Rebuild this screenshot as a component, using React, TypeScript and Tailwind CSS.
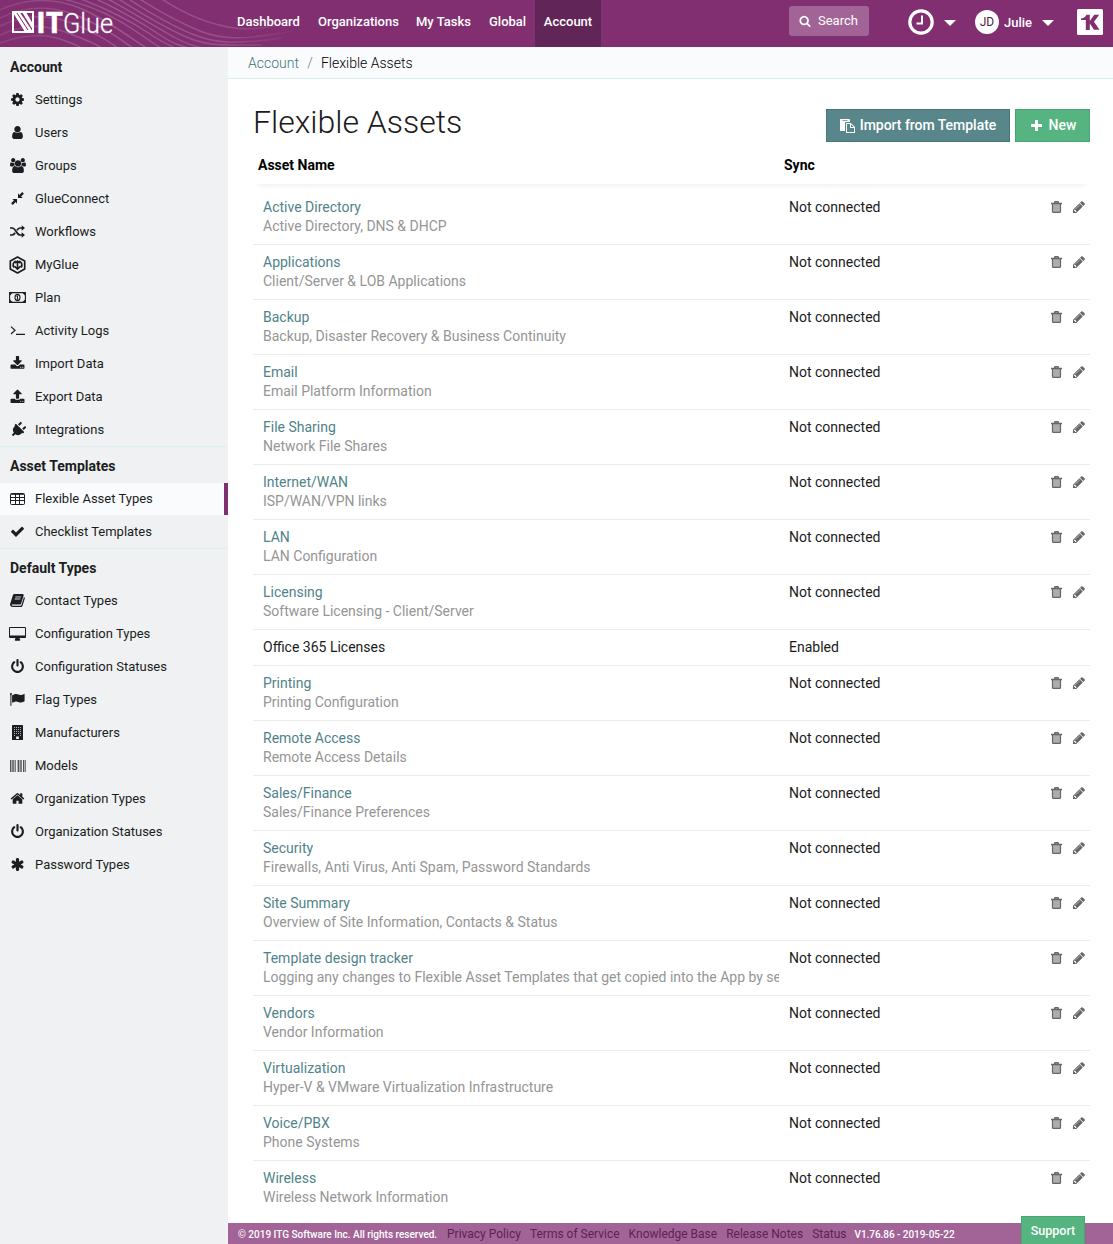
import React from 'react';
import { FaPlug } from 'react-icons/fa';

interface GlyphProps {
    d: string;
    viewBox?: string;
    className?: string;
}

const Glyph: React.FC<GlyphProps> = ({ d, viewBox = '0 0 1792 1792', className = 'w-[15px] h-[15px]' }) => (
    <svg className={className} viewBox={viewBox} fill="currentColor"><path fillRule="evenodd" d={d} /></svg>
);

const COG = 'M1152 896q0-106-75-181t-181-75-181 75-75 181 75 181 181 75 181-75 75-181zm512-109v222q0 12-8 23t-20 13l-185 28q-19 54-39 91 35 50 107 138 10 12 10 25t-9 23q-27 37-99 108t-94 71q-12 0-26-9l-138-108q-44 23-91 38-16 136-29 186-7 28-36 28h-222q-14 0-24.5-8.5t-11.5-21.5l-28-184q-49-16-90-37l-141 107q-10 9-25 9-14 0-25-11-126-114-165-168-7-10-7-23 0-12 8-23 15-21 51-66.5t54-70.5q-27-50-41-99l-183-27q-13-2-21-12.5t-8-23.5v-222q0-12 8-23t19-13l186-28q14-46 39-92-40-57-107-138-10-12-10-24 0-10 9-23 26-36 98.5-107.5t94.5-71.5q13 0 26 10l138 107q44-23 91-38 16-136 29-186 7-28 36-28h222q14 0 24.5 8.5t11.5 21.5l28 184q49 16 90 37l142-107q9-9 24-9 13 0 25 10 129 119 165 170 7 8 7 22 0 12-8 23-15 21-51 66.5t-54 70.5q26 50 41 98l183 28q13 2 21 12.5t8 23.5z';
const USER = 'M1536 1399q0 109-62.5 187t-150.5 78h-854q-88 0-150.5-78t-62.5-187q0-85 8.5-160.5t31.5-152 58.5-131 94-89 134.5-34.5q131 128 313 128t313-128q76 0 134.5 34.5t94 89 58.5 131 31.5 152 8.5 160.5zm-256-887q0 159-112.5 271.5t-271.5 112.5-271.5-112.5-112.5-271.5 112.5-271.5 271.5-112.5 271.5 112.5 112.5 271.5z';
const USERS = 'M593 896q-162 5-265 128h-134q-82 0-138-40.5t-56-118.5q0-353 124-353 6 0 43.5 21t97.5 42.5 119 21.5q67 0 133-23-5 37-5 66 0 139 81 256zm1071 637q0 120-73 189.5t-194 69.5h-874q-121 0-194-69.5t-73-189.5q0-53 3.5-103.5t14-109 26.5-108.5 43-97.5 62-81 85.5-53.5 111.5-20q10 0 43 21.5t73 48 107 48 135 21.5 135-21.5 107-48 73-48 43-21.5q61 0 111.5 20t85.5 53.5 62 81 43 97.5 26.5 108.5 14 109 3.5 103.5zm-1024-1277q0 106-75 181t-181 75-181-75-75-181 75-181 181-75 181 75 75 181zm704 384q0 159-112.5 271.5t-271.5 112.5-271.5-112.5-112.5-271.5 112.5-271.5 271.5-112.5 271.5 112.5 112.5 271.5zm576 225q0 78-56 118.5t-138 40.5h-134q-103-123-265-128 81-117 81-256 0-29-5-66 66 23 133 23 59 0 119-21.5t97.5-42.5 43.5-21q124 0 124 353zm-128-609q0 106-75 181t-181 75-181-75-75-181 75-181 181-75 181 75 75 181z';
const DOWNLOAD = 'M1344 1344q0-26-19-45t-45-19-45 19-19 45 19 45 45 19 45-19 19-45zm256 0q0-26-19-45t-45-19-45 19-19 45 19 45 45 19 45-19 19-45zm128-224v320q0 40-28 68t-68 28h-1472q-40 0-68-28t-28-68v-320q0-40 28-68t68-28h465l135 136q58 56 136 56t136-56l136-136h464q40 0 68 28t28 68zm-325-569q17 41-14 70l-448 448q-18 19-45 19t-45-19l-448-448q-31-29-14-70 17-39 59-39h256v-448q0-26 19-45t45-19h256q26 0 45 19t19 45v448h256q42 0 59 39z';
const UPLOAD = 'M1344 1472q0-26-19-45t-45-19-45 19-19 45 19 45 45 19 45-19 19-45zm256 0q0-26-19-45t-45-19-45 19-19 45 19 45 45 19 45-19 19-45zm128-224v320q0 40-28 68t-68 28h-1472q-40 0-68-28t-28-68v-320q0-40 28-68t68-28h427q21 56 70.5 92t110.5 36h256q61 0 110.5-36t70.5-92h427q40 0 68 28t28 68zm-325-648q-17 40-59 40h-256v448q0 26-19 45t-45 19h-256q-26 0-45-19t-19-45v-448h-256q-42 0-59-40-17-39 14-69l448-448q18-19 45-19t45 19l448 448q31 30 14 69z';
const CHECK = 'M1671 566q0 40-28 68l-724 724-136 136q-28 28-68 28t-68-28l-136-136-362-362q-28-28-28-68t28-68l136-136q28-28 68-28t68 28l294 295 656-657q28-28 68-28t68 28l136 136q28 28 28 68z';
const POWER = 'M1664 896q0 156-61 298t-164 245-245 164-298 61-298-61-245-164-164-245-61-298q0-182 80.5-343t226.5-270q43-32 95.5-25t83.5 50q32 42 24.5 94.5t-49.5 84.5q-98 74-151.5 181t-53.5 228q0 104 40.5 198.5t109.5 163.5 163.5 109.5 198.5 40.5 198.5-40.5 163.5-109.5 109.5-163.5 40.5-198.5q0-121-53.5-228t-151.5-181q-42-32-49.5-84.5t24.5-94.5q31-43 84-50t95 25q146 109 226.5 270t80.5 343zm-640-768v640q0 52-38 90t-90 38-90-38-38-90v-640q0-52 38-90t90-38 90 38 38 90z';
const HOME = 'M1472 992v480q0 26-19 45t-45 19h-384v-384h-256v384h-384q-26 0-45-19t-19-45v-480q0-1 .5-3t.5-3l575-474 575 474q1 2 1 6zm223-69l-62 74q-8 9-21 11h-3q-13 0-21-7l-692-577-692 577q-12 8-24 7-13-2-21-11l-62-74q-8-10-7-23.5t11-21.5l719-599q32-26 76-26t76 26l244 204v-195q0-14 9-23t23-9h192q14 0 23 9t9 23v408l219 182q10 8 11 21.5t-7 23.5z';
const ASTERISK = 'M1546 1050q46 26 59.5 77.5t-12.5 97.5l-64 110q-26 46-77.5 59.5t-97.5-12.5l-266-153v307q0 52-38 90t-90 38h-128q-52 0-90-38t-38-90v-307l-266 153q-46 26-97.5 12.5t-77.5-59.5l-64-110q-26-46-12.5-97.5t59.5-77.5l266-154-266-154q-46-26-59.5-77.5t12.5-97.5l64-110q26-46 77.5-59.5t97.5 12.5l266 153v-307q0-52 38-90t90-38h128q52 0 90 38t38 90v307l266-153q46-26 97.5-12.5t77.5 59.5l64 110q26 46 12.5 97.5t-59.5 77.5l-266 154z';
const SEARCH = 'M1216 832q0-185-131.5-316.5t-316.5-131.5-316.5 131.5-131.5 316.5 131.5 316.5 316.5 131.5 316.5-131.5 131.5-316.5zm512 832q0 52-38 90t-90 38q-54 0-90-38l-343-342q-179 124-399 124-143 0-273.5-55.5t-225-150-150-225-55.5-273.5 55.5-273.5 150-225 225-150 273.5-55.5 273.5 55.5 225 150 150 225 55.5 273.5q0 220-124 399l343 343q37 37 37 90z';
const PENCIL = 'M491 1536l91-91-235-235-91 91v107h128v128h107zm523-928q0-22-22-22-10 0-17 7l-542 542q-7 7-7 17 0 22 22 22 10 0 17-7l542-542q7-7 7-17zm-54-192l416 416-832 832h-416v-416zm683 96q0 53-37 90l-166 166-416-416 166-165q36-38 90-38 53 0 91 38l235 234q37 39 37 91z';

const CompressIcon = () => (
    <svg className="w-[13px] h-[13px]" viewBox="0 0 13 13" fill="currentColor">
        <path d="M7 1.300v4.700h4.700L10.100 4.600 12.900 1.800 11.200.1 8.400 2.900zM6 7H1.300l1.600 1.400L.1 11.200l1.700 1.700 2.800-2.800L6 11.700z" />
    </svg>
);

const ShuffleIcon = () => (
    <svg className="w-[15px] h-[13px]" viewBox="0 0 15 13" fill="none" stroke="currentColor" strokeWidth="1.700">
        <path d="M0 3h2.200C5.800 3 6.500 10 10 10h2.300M0 10h2.200c1.400 0 2.200-1 2.900-2.200M7 5.200C7.700 4 8.600 3 10 3h2.300" />
        <path fill="currentColor" stroke="none" d="M11.700.2L15 3l-3.300 2.800zM11.700 7.200L15 10l-3.300 2.800z" />
    </svg>
);

const HexIcon = () => (
    <svg className="w-[17px] h-[18px]" viewBox="0 0 17 18" fill="none" stroke="currentColor">
        <path strokeWidth="1.7" strokeLinejoin="round" d="M8.500 1l7.200 4v8l-7.200 4-7.200-4V5z" />
        <path strokeWidth="1.7" d="M6.700 4.900A4.500 4.500 0 004.900 11.500M10.300 4.900a4.500 4.500 0 011.800 6.600" />
        <path strokeWidth="1.6" d="M8.500 5v8M6.200 7.200l2.300-2.200 2.300 2.200M5.300 10.200l3.200 3 3.200-3" />
    </svg>
);

const MoneyIcon = () => (
    <svg className="w-[17px] h-[11px]" viewBox="0 0 17 11" fill="none" stroke="currentColor">
        <path strokeWidth="1.1" d="M.6.6h15.800v9.800H.6z" />
        <path fill="currentColor" stroke="none" d="M1 1h2.400L1 3.400zM16 1h-2.400L16 3.400zM1 10h2.400L1 7.600zM16 10h-2.400L16 7.600z" />
        <ellipse cx="8.500" cy="5.500" rx="2.500" ry="3.100" strokeWidth="1.1" />
        <path strokeWidth="1" d="M7.500 4.400l1-.7v3.400M7.500 7.200h2" />
    </svg>
);

const TerminalIcon = () => (
    <svg className="w-[15px] h-[9px]" viewBox="0 0 15 9" fill="none" stroke="currentColor" strokeWidth="1.200">
        <path d="M1 .6l4 3.700L1 8M6 8.400h9" />
    </svg>
);

const TableIcon = () => (
    <svg className="w-[15px] h-3" viewBox="0 0 15 12" fill="none" stroke="currentColor">
        <rect x=".5" y=".5" width="14" height="11" rx="1" />
        <path d="M1 1.300h13M1 4.500h13M1 7.500h13M5.500 1v10M9.500 1v10" />
    </svg>
);

const BookIcon = () => (
    <svg className="w-[15px] h-[13px]" viewBox="0 0 14 12">
        <path fill="currentColor" d="M4.200 0h7.600c.8 0 1.100.6.9 1.300l-2.300 7.400c-.2.800-.8 1.100-1.500 1.100H2.100c-.4 0-.6.200-.5.600.1.300.4.400.8.400h7.300c.5 0 .9-.2 1-.7L13 2.700c.7.300 1 .8.8 1.500l-2.100 6.600c-.3.800-.9 1.200-1.700 1.200H2.300C.9 12-.2 10.700.1 9.300L2.600 1.400C2.900.5 3.400 0 4.200 0z" />
        <path stroke="#f0f1f3" strokeWidth=".8" d="M5 2.700h5.200M4.400 4.600h5.200" />
    </svg>
);

const DesktopIcon = () => (
    <svg className="w-[17px] h-[14px]" viewBox="0 0 17 14">
        <path fill="currentColor" fillRule="evenodd" d="M1.300 0h14.400C16.500 0 17 .5 17 1.300v8.400c0 .8-.5 1.300-1.300 1.300H10.500c0 .9.800 1.500.8 2s-.3.700-.7.700H6.400c-.4 0-.7-.2-.7-.7s.8-1.100.8-2H1.300C.5 11 0 10.500 0 9.700V1.300C0 .5.500 0 1.300 0zm-.3 1v7.400h15V1z" />
    </svg>
);

const FlagIcon = () => (
    <svg className="w-[15px] h-[13px]" viewBox="0 0 15 13" fill="currentColor">
        <path d="M.9 0a1 1 0 01.5 1.900V12.500c0 .3-.2.500-.5.500s-.5-.2-.5-.5V1.900A1 1 0 01.9 0zM2.300 2.300C4 1.400 5 1 6.300 1 8 1 8.800 2 10.400 2c1.300 0 2.500-.6 3.600-1.100.4-.1.600.1.600.5v6.300c0 .4-.2.500-.5.700-1.200.6-2.300 1.100-3.500 1.100C8.800 9.500 8 8.400 6.300 8.400c-1.300 0-2.500.6-3.500 1.200-.4.200-.7 0-.7-.4V2.800c0-.2 0-.4.200-.5z" />
    </svg>
);

const BuildingIcon = () => (
    <svg className="w-[11px] h-[15px]" viewBox="0 0 12 15" preserveAspectRatio="none">
        <path fill="currentColor" d="M.6 0h10.800q.6 0 .6.600v13.800q0 .6-.6.600H.6q-.6 0-.6-.6V.6Q0 0 .6 0z" />
        <path stroke="#f0f1f3" strokeWidth=".8" strokeDasharray="1 1.160" d="M2.200 2.500h8M2.200 4.500h8M2.200 6.500h8M2.200 8.500h8M2.200 10.500h2M8.680 10.500h2" />
        <path fill="#f0f1f3" d="M4.500 11.500h3v2.500h-3z" />
    </svg>
);

const BarcodeIcon = () => (
    <svg className="w-4 h-3" viewBox="0 0 16 12" fill="currentColor">
        <path opacity=".75" d="M0 0h1v12H0zM8 0h1v12H8zM13 0h1v12h-1z" />
        <path opacity=".55" d="M2 0h2v12H2zM5 0h1v12H5zM10 0h2v12h-2zM15 0h1v12h-1z" />
        <path opacity=".3" d="M1 0h1v12H1zM4 0h1v12H4zM7 0h1v12H7zM9 0h1v12H9zM14 0h1v12h-1z" />
    </svg>
);

const TrashIcon = () => (
    <svg className="w-[11px] h-3" viewBox="0 0 11 12">
        <path fill="#adadad" d="M1.500 3h8v8h-8z" />
        <path fill="none" stroke="#666" strokeWidth="1.200" d="M1.500 2.500v8q0 .9.900.9h6.200q.9 0 .9-.9v-8" />
        <path fill="none" stroke="#666" strokeWidth="1.400" d="M0 2.500h11M3.500 2.200L4 .7h3l.5 1.500" />
    </svg>
);

const PasteIcon = () => (
    <svg className="w-[15px] h-[14px]" viewBox="0 0 15 14" fill="currentColor">
        <path fillRule="evenodd" d="M.6 0h8.800q.6 0 .6.600V3H6.200Q5 3 5 4.200V12H.6Q0 12 0 11.400V.6Q0 0 .6 0zM2.500 1v.8h5V1z" />
        <path fillRule="evenodd" d="M6.600 4h4.200L15 8v5.400q0 .6-.6.600H6.600Q6 14 6 13.400V4.600Q6 4 6.600 4zM7 5v8h7V9h-3.500q-.5 0-.5-.5V5zm4 .4V8h2.700z" />
    </svg>
);

interface NavItem {
    label: string;
    icon: React.ReactNode;
    active?: boolean;
}

const SECTIONS: { title: string; items: NavItem[] }[] = [
    {
        title: 'Account',
        items: [
            { label: 'Settings', icon: <Glyph d={COG} /> },
            { label: 'Users', icon: <Glyph d={USER} /> },
            { label: 'Groups', icon: <Glyph d={USERS} viewBox="0 0 1920 1792" className="w-4 h-[15px]" /> },
            { label: 'GlueConnect', icon: <CompressIcon /> },
            { label: 'Workflows', icon: <ShuffleIcon /> },
            { label: 'MyGlue', icon: <HexIcon /> },
            { label: 'Plan', icon: <MoneyIcon /> },
            { label: 'Activity Logs', icon: <TerminalIcon /> },
            { label: 'Import Data', icon: <Glyph d={DOWNLOAD} /> },
            { label: 'Export Data', icon: <Glyph d={UPLOAD} /> },
            { label: 'Integrations', icon: <FaPlug className="w-4 h-4 rotate-45" /> },
        ],
    },
    {
        title: 'Asset Templates',
        items: [
            { label: 'Flexible Asset Types', icon: <TableIcon />, active: true },
            { label: 'Checklist Templates', icon: <Glyph d={CHECK} /> },
        ],
    },
    {
        title: 'Default Types',
        items: [
            { label: 'Contact Types', icon: <BookIcon /> },
            { label: 'Configuration Types', icon: <DesktopIcon /> },
            { label: 'Configuration Statuses', icon: <Glyph d={POWER} /> },
            { label: 'Flag Types', icon: <FlagIcon /> },
            { label: 'Manufacturers', icon: <BuildingIcon /> },
            { label: 'Models', icon: <BarcodeIcon /> },
            { label: 'Organization Types', icon: <Glyph d={HOME} /> },
            { label: 'Organization Statuses', icon: <Glyph d={POWER} /> },
            { label: 'Password Types', icon: <Glyph d={ASTERISK} /> },
        ],
    },
];

interface Asset {
    name: string;
    description?: string;
    sync: string;
}

const ASSETS: Asset[] = [
    { name: 'Active Directory', description: 'Active Directory, DNS & DHCP', sync: 'Not connected' },
    { name: 'Applications', description: 'Client/Server & LOB Applications', sync: 'Not connected' },
    { name: 'Backup', description: 'Backup, Disaster Recovery & Business Continuity', sync: 'Not connected' },
    { name: 'Email', description: 'Email Platform Information', sync: 'Not connected' },
    { name: 'File Sharing', description: 'Network File Shares', sync: 'Not connected' },
    { name: 'Internet/WAN', description: 'ISP/WAN/VPN links', sync: 'Not connected' },
    { name: 'LAN', description: 'LAN Configuration', sync: 'Not connected' },
    { name: 'Licensing', description: 'Software Licensing - Client/Server', sync: 'Not connected' },
    { name: 'Office 365 Licenses', sync: 'Enabled' },
    { name: 'Printing', description: 'Printing Configuration', sync: 'Not connected' },
    { name: 'Remote Access', description: 'Remote Access Details', sync: 'Not connected' },
    { name: 'Sales/Finance', description: 'Sales/Finance Preferences', sync: 'Not connected' },
    { name: 'Security', description: 'Firewalls, Anti Virus, Anti Spam, Password Standards', sync: 'Not connected' },
    { name: 'Site Summary', description: 'Overview of Site Information, Contacts & Status', sync: 'Not connected' },
    { name: 'Template design tracker', description: 'Logging any changes to Flexible Asset Templates that get copied into the App by se', sync: 'Not connected' },
    { name: 'Vendors', description: 'Vendor Information', sync: 'Not connected' },
    { name: 'Virtualization', description: 'Hyper-V & VMware Virtualization Infrastructure', sync: 'Not connected' },
    { name: 'Voice/PBX', description: 'Phone Systems', sync: 'Not connected' },
    { name: 'Wireless', description: 'Wireless Network Information', sync: 'Not connected' },
];

const Logo = () => (
    <svg className="absolute left-0 top-0 w-[320px] h-[47px]" viewBox="0 0 320 47" fill="none">
        <defs>
            <linearGradient id="wave" gradientUnits="userSpaceOnUse" x1="0" y1="0" x2="320" y2="0">
                <stop offset="0" stopColor="#fff" stopOpacity=".1" />
                <stop offset=".35" stopColor="#fff" stopOpacity=".2" />
                <stop offset=".7" stopColor="#fff" stopOpacity=".16" />
                <stop offset=".95" stopColor="#fff" stopOpacity="0" />
            </linearGradient>
        </defs>
        <g stroke="url(#wave)" strokeWidth="1.400">
            <path d="M0 10C25-2 55-3 82 9S130 38 150 50" />
            <path d="M0 18C25 6 52 5 78 16S118 38 136 50" />
            <path d="M0 26C25 14 50 14 74 24S108 41 121 50" />
            <path d="M0 35C25 24 45 24 68 33S96 44 105 50" />
            <path d="M0 43C25 34 45 34 60 39S78 46 86 50" />
            <path d="M58-2C90 4 120 20 140 34S158 46 164 50" />
            <path d="M78-2C106 8 132 22 150 34S172 46 180 50" />
            <path d="M94-2C120 10 142 23 160 35S184 46 196 50" />
            <path d="M106-2C132 12 152 25 172 36S200 47 212 50" />
            <path d="M117-2C142 14 162 26 184 36S218 45 262 45" />
            <path d="M127-2C150 13 170 25 192 34S232 45 282 38" />
            <path d="M138-2C160 12 180 23 200 31S240 41 292 31" />
            <path d="M160-2C182 12 202 22 228 27S272 27 310 16" />
        </g>
        <path stroke="#fff" strokeWidth="2" d="M13 12h20v20H13z" />
        <path fill="#fff" d="M12 11h7l14 21h-8zM22 12h4l7 12v6z" />
        <path stroke="#812f70" strokeWidth="1" d="M17 13l11 17" />
        <text x="36" y="32.500" fill="#fff" stroke="#fff" strokeWidth=".4" fontFamily="Open Sans, sans-serif" fontWeight="700" fontSize="28.500" textLength="27" lengthAdjust="spacingAndGlyphs">IT</text>
        <text x="63" y="32.500" fill="#fff" stroke="#fff" strokeWidth=".3" fontFamily="Roboto, sans-serif" fontWeight="300" fontSize="28.500" textLength="50" lengthAdjust="spacingAndGlyphs">Glue</text>
    </svg>
);

const Caret = ({ className = '' }: { className?: string }) => (
    <svg className={`w-3 h-[6px] ${className}`} viewBox="0 0 12 6" fill="#fff"><path d="M0 0h12L6 6z" /></svg>
);

const TopBar = () => (
    <header className="relative h-[47px] shrink-0 bg-[#812f70] flex items-start text-white text-[13px] font-medium">
        <Logo />
        <nav className="relative flex h-full pl-[224px] leading-[43px] whitespace-nowrap">
            <a className="w-[81px] pl-[13px]">Dashboard</a>
            <a className="w-[98px] pl-[13px]">Organizations</a>
            <a className="w-[73px] pl-[13px]">My Tasks</a>
            <a className="w-[59px] pl-[13px]">Global</a>
            <a className="w-[66px] text-center bg-[#622557]">Account</a>
        </nav>
        <div className="ml-[188px] mt-[6px] w-20 h-[30px] pb-px rounded-[3px] bg-[#a26497] flex items-center pl-[10px] gap-[7px]">
            <Glyph d={SEARCH} className="w-3 h-3" />
            <span className="leading-[14px] font-normal">Search</span>
        </div>
        <svg className="ml-[39px] mt-[9px] w-[26px] h-[26px]" viewBox="0 0 26 26" fill="none" stroke="#fff">
            <circle cx="13" cy="13" r="11.200" strokeWidth="3.200" />
            <path strokeWidth="2" d="M14 6.500v8H8.500" />
        </svg>
        <Caret className="ml-[10px] mt-5" />
        <div className="ml-[19px] mt-[10px] w-6 h-6 rounded-full bg-white text-[#4a2244] font-normal text-xs flex items-center justify-center">JD</div>
        <span className="ml-[5px] w-[29px] leading-[45px]">Julie</span>
        <Caret className="ml-[9px] mt-5" />
        <svg className="ml-[23px] mt-[9px] w-[26px] h-[26px]" viewBox="0 0 26 26">
            <rect width="26" height="26" rx="1.500" fill="#fff" />
            <path fill="#812f70" d="M4 9.500Q8 9 9.500 5.700h3.300V12l4.400-6.300h5L17 12.800l5.500 8H17l-4.200-6.300V21H8.800V11H4z" />
        </svg>
    </header>
);

const Sidebar = () => (
    <aside className="w-[228px] shrink-0 bg-[#f0f1f3] text-[#1a1d21] text-[13px]">
        {SECTIONS.map((section, i) => (
            <div key={section.title} className={`border-t ${i === 0 ? 'border-transparent' : 'border-[#d9f1ee]'}`}>
                <h3 className="h-9 pl-[10px] leading-[38px] text-[14px] font-bold">{section.title}</h3>
                <ul className="flex flex-col gap-px">
                    {section.items.map((item) => (
                        <li
                            key={item.label}
                            className={`h-8 flex items-center border-r-4 ${item.active ? 'bg-[#fafbfd] border-[#812f70]' : 'border-transparent'}`}
                        >
                            <span className="w-[35px] h-[31px] pb-px flex items-center justify-center">{item.icon}</span>
                            <span>{item.label}</span>
                        </li>
                    ))}
                </ul>
            </div>
        ))}
    </aside>
);

const AssetRow: React.FC<{ asset: Asset; last: boolean }> = ({ asset, last }) => (
    <div className={`flex pl-[10px] pt-2 leading-[19px] ${asset.description ? 'h-[55px]' : 'h-9'} ${last ? '' : 'border-b border-[#ebebeb]'}`}>
        <div className="w-[516px] shrink-0 overflow-hidden whitespace-nowrap">
            <div className={asset.description ? 'text-[#4f8389]' : 'text-[#1a1a1a]'}>{asset.name}</div>
            {asset.description && <div className="text-[#959595]">{asset.description}</div>}
        </div>
        <div className="ml-[10px] flex-1 text-[#1a1a1a]">{asset.sync}</div>
        {asset.description && (
            <div className="flex gap-[10px] pr-[4px] pt-[3px] text-[#666]">
                <TrashIcon />
                <Glyph d={PENCIL} className="w-[14px] h-[14px] -mt-px" />
            </div>
        )}
    </div>
);

const Footer = () => (
    <footer className="mt-[7px] h-[21px] bg-[#a26497] flex items-center pl-[10px] text-[12px] text-[#5e2153] gap-[9px] whitespace-nowrap">
        <span className="w-[200px] pt-px text-white font-medium text-[10px]">© 2019 ITG Software Inc. All rights reserved.</span>
        <a>Privacy Policy</a>
        <a>Terms of Service</a>
        <a>Knowledge Base</a>
        <a>Release Notes</a>
        <a>Status</a>
        <span className="-ml-px pt-px text-white font-medium text-[10px] tracking-[-0.05px]">V1.76.86 - 2019-05-22</span>
        <button className="ml-auto mr-7 -mt-[7px] pt-[2px] w-16 h-7 border border-[#48a673] border-b-0 bg-[#56b480] text-white text-[12.5px] font-medium">Support</button>
    </footer>
);

export default function App() {
    return (
        <div className="h-[1244px] w-[1113px] flex flex-col overflow-hidden bg-white font-['Roboto',sans-serif] text-[14px]">
            <TopBar />
            <div className="flex flex-1">
                <Sidebar />
                <main className="flex-1 min-w-0">
                    <div className="h-8 bg-[#fafbfd] border-b border-[#d5f0ec] pl-5 leading-8 flex font-light">
                        <a className="text-[#3f757b]">Account</a>
                        <span className="w-[22px] text-center text-[#777]">/</span>
                        <span className="text-black">Flexible Assets</span>
                    </div>
                    <div className="pl-[25px] pr-[23px]">
                        <div className="flex pt-[30px] h-[68px] gap-[5px]">
                            <h1 className="flex-1 text-[32px] leading-[26px] font-light text-[#1a1a1a]">Flexible Assets</h1>
                            <button className="w-[184px] h-[33px] border border-[#467679] bg-[#58868b] text-white font-medium flex items-center justify-center gap-[5px] tracking-[-0.03px]">
                                <PasteIcon />
                                Import from Template
                            </button>
                            <button className="w-[75px] h-[33px] border border-[#48a673] bg-[#56b480] text-white font-medium flex items-center justify-center gap-[7px] pl-[2px]">
                                <svg className="w-[11px] h-[11px]" viewBox="0 0 11 11" fill="currentColor"><path d="M4 0h3v4h4v3H7v4H4V7H0V4h4z" /></svg>
                                New
                            </button>
                        </div>
                        <div className="h-[37px] mb-[6px] flex pl-[5px] leading-[36px] font-bold text-black shadow-[0_6px_6px_-5px_rgba(0,0,0,0.08)]">
                            <div className="w-[526px]">Asset Name</div>
                            <div>Sync</div>
                        </div>
                        {ASSETS.map((asset, i) => (
                            <AssetRow key={asset.name} asset={asset} last={i === ASSETS.length - 1} />
                        ))}
                    </div>
                    <Footer />
                </main>
            </div>
        </div>
    );
}
